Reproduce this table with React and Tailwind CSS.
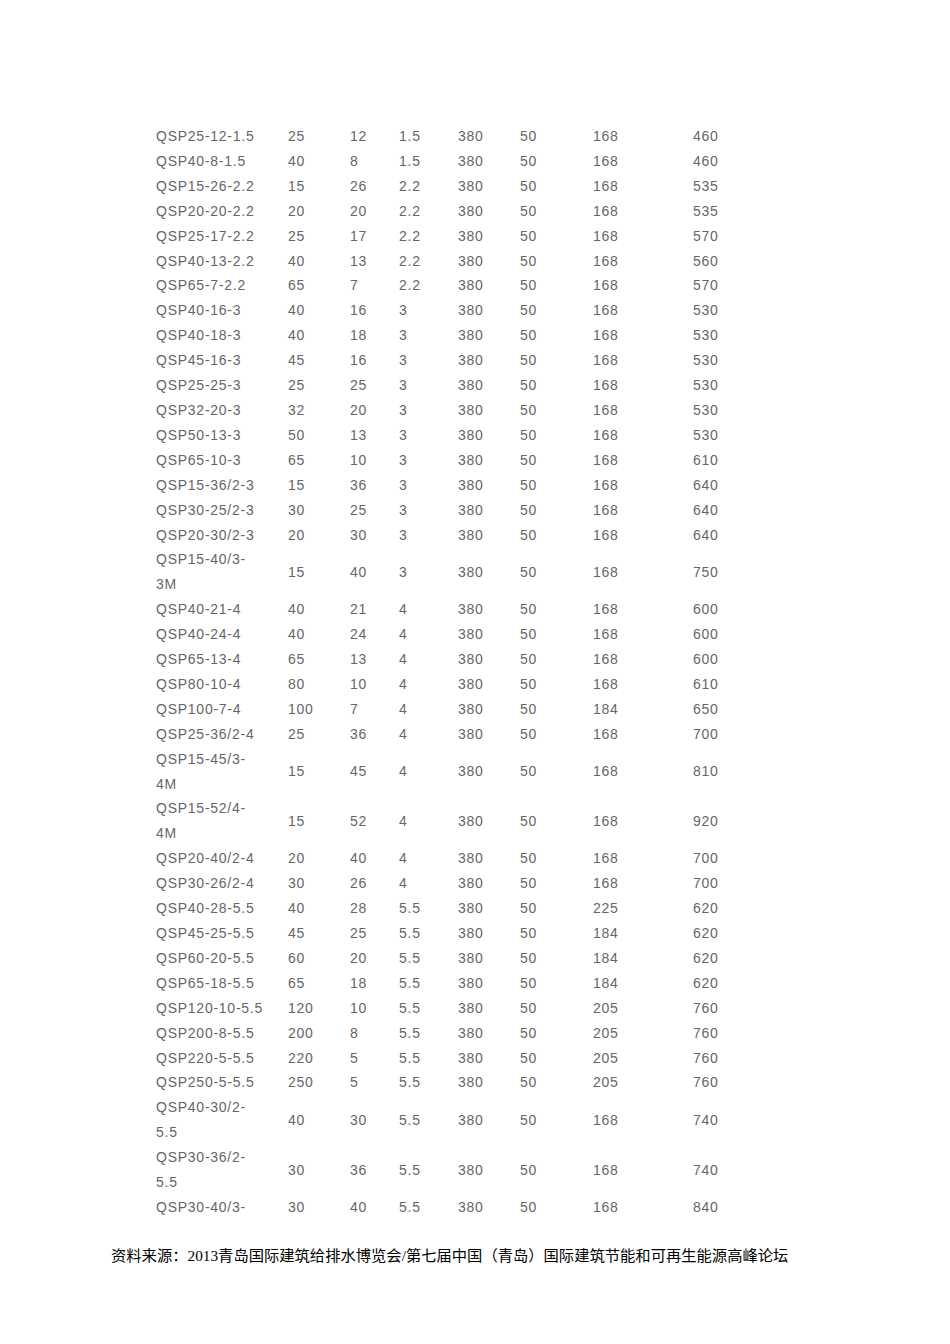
import React from "react";

const rows = [
  ["QSP25-12-1.5", "25", "12", "1.5", "380", "50", "168", "460"],
  ["QSP40-8-1.5", "40", "8", "1.5", "380", "50", "168", "460"],
  ["QSP15-26-2.2", "15", "26", "2.2", "380", "50", "168", "535"],
  ["QSP20-20-2.2", "20", "20", "2.2", "380", "50", "168", "535"],
  ["QSP25-17-2.2", "25", "17", "2.2", "380", "50", "168", "570"],
  ["QSP40-13-2.2", "40", "13", "2.2", "380", "50", "168", "560"],
  ["QSP65-7-2.2", "65", "7", "2.2", "380", "50", "168", "570"],
  ["QSP40-16-3", "40", "16", "3", "380", "50", "168", "530"],
  ["QSP40-18-3", "40", "18", "3", "380", "50", "168", "530"],
  ["QSP45-16-3", "45", "16", "3", "380", "50", "168", "530"],
  ["QSP25-25-3", "25", "25", "3", "380", "50", "168", "530"],
  ["QSP32-20-3", "32", "20", "3", "380", "50", "168", "530"],
  ["QSP50-13-3", "50", "13", "3", "380", "50", "168", "530"],
  ["QSP65-10-3", "65", "10", "3", "380", "50", "168", "610"],
  ["QSP15-36/2-3", "15", "36", "3", "380", "50", "168", "640"],
  ["QSP30-25/2-3", "30", "25", "3", "380", "50", "168", "640"],
  ["QSP20-30/2-3", "20", "30", "3", "380", "50", "168", "640"],
  [["QSP15-40/3-", "3M"], "15", "40", "3", "380", "50", "168", "750"],
  ["QSP40-21-4", "40", "21", "4", "380", "50", "168", "600"],
  ["QSP40-24-4", "40", "24", "4", "380", "50", "168", "600"],
  ["QSP65-13-4", "65", "13", "4", "380", "50", "168", "600"],
  ["QSP80-10-4", "80", "10", "4", "380", "50", "168", "610"],
  ["QSP100-7-4", "100", "7", "4", "380", "50", "184", "650"],
  ["QSP25-36/2-4", "25", "36", "4", "380", "50", "168", "700"],
  [["QSP15-45/3-", "4M"], "15", "45", "4", "380", "50", "168", "810"],
  [["QSP15-52/4-", "4M"], "15", "52", "4", "380", "50", "168", "920"],
  ["QSP20-40/2-4", "20", "40", "4", "380", "50", "168", "700"],
  ["QSP30-26/2-4", "30", "26", "4", "380", "50", "168", "700"],
  ["QSP40-28-5.5", "40", "28", "5.5", "380", "50", "225", "620"],
  ["QSP45-25-5.5", "45", "25", "5.5", "380", "50", "184", "620"],
  ["QSP60-20-5.5", "60", "20", "5.5", "380", "50", "184", "620"],
  ["QSP65-18-5.5", "65", "18", "5.5", "380", "50", "184", "620"],
  ["QSP120-10-5.5", "120", "10", "5.5", "380", "50", "205", "760"],
  ["QSP200-8-5.5", "200", "8", "5.5", "380", "50", "205", "760"],
  ["QSP220-5-5.5", "220", "5", "5.5", "380", "50", "205", "760"],
  ["QSP250-5-5.5", "250", "5", "5.5", "380", "50", "205", "760"],
  [["QSP40-30/2-", "5.5"], "40", "30", "5.5", "380", "50", "168", "740"],
  [["QSP30-36/2-", "5.5"], "30", "36", "5.5", "380", "50", "168", "740"],
  ["QSP30-40/3-", "30", "40", "5.5", "380", "50", "168", "840"],
];

export default function App() {
  return (
    <div className="min-h-[1344px] w-[950px] bg-white">
      <div className="pt-[124px] pl-[156px] text-[14px] leading-[24.9px] tracking-[0.75px] text-[#666666] [font-family:'Liberation_Sans',Arial,sans-serif]">
        {rows.map((r, i) => (
          <div
            key={i}
            className="grid grid-cols-[132px_62px_49px_59px_62px_73px_100px_60px] items-center whitespace-nowrap"
          >
            <div>
              {Array.isArray(r[0]) ? (
                <>
                  {r[0][0]}
                  <br />
                  {r[0][1]}
                </>
              ) : (
                r[0]
              )}
            </div>
            {r.slice(1).map((c, j) => (
              <div key={j}>{c}</div>
            ))}
          </div>
        ))}
      </div>
      <div className="mt-[25px] pl-[111px] text-[15.3px] leading-[22px] text-black whitespace-nowrap [font-family:'Liberation_Serif','Noto_Sans_CJK_SC',serif]">
        资料来源：2013青岛国际建筑给排水博览会/第七届中国（青岛）国际建筑节能和可再生能源高峰论坛
      </div>
    </div>
  );
}
